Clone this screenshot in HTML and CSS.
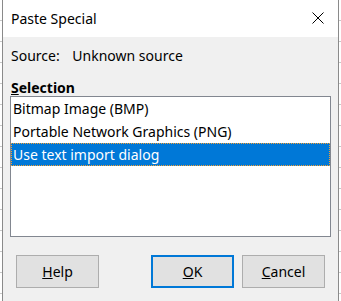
FILE: index.html
```html
<!DOCTYPE html>
<html lang="en">
<head>
    <meta charset="UTF-8">
    <title>Paste Special</title>
    <link rel="stylesheet" href="styles.css">
</head>
<body>
    <div class="screen">
        <div class="gutter"></div>
        <div class="dialog">
            <div class="titlebar">
                <span class="title">Paste Special</span>
                <svg class="close" width="12" height="12" viewBox="0 0 12 12">
                    <path d="M0.5 0.5 L11.5 11.5 M11.5 0.5 L0.5 11.5" stroke="#000" stroke-width="1" fill="none"/>
                </svg>
            </div>
            <div class="content">
                <div class="source">
                    <span class="source-label">Source:</span>
                    <span>Unknown source</span>
                </div>
                <div class="sel-label"><u>S</u>election</div>
                <ul class="listbox">
                    <li>Bitmap Image (BMP)</li>
                    <li>Portable Network Graphics (PNG)</li>
                    <li class="selected">Use text import dialog</li>
                </ul>
                <div class="buttons">
                    <button class="btn"><u>H</u>elp</button>
                    <div class="spacer"></div>
                    <button class="btn btn-default"><u>O</u>K</button>
                    <button class="btn"><u>C</u>ancel</button>
                </div>
            </div>
        </div>
        <div class="gutter"></div>
    </div>
</body>
</html>
```

FILE: styles.css
```css
:root {
    --dialog-bg: #f0f0f0;
    --border: #8a8a8a;
    --btn-bg: #e1e1e1;
    --btn-border: #adadad;
    --accent: #0078d7;
}

* {
    margin: 0;
    padding: 0;
    box-sizing: border-box;
}

body {
    background: #fff;
    font-family: "Noto Sans", "Open Sans", sans-serif;
    font-size: 14px;
    color: #000;
}

.screen {
    display: flex;
    height: 301px;
    overflow: hidden;
}

.gutter {
    width: 2px;
    background: repeating-linear-gradient(to bottom, transparent 0 20px, #c8c8c8 20px 21px);
}

.dialog {
    width: 337px;
    display: flex;
    flex-direction: column;
    border-left: 1px solid var(--border);
    border-right: 1px solid var(--border);
    background: var(--dialog-bg);
}

.titlebar {
    height: 37px;
    background: #fff;
    display: flex;
    align-items: center;
    justify-content: space-between;
    padding: 0 14px 0 8px;
}

.title {
    line-height: 37px;
}

.close {
    display: block;
    margin-top: -1px;
}

.content {
    flex: 1;
    padding: 9px 7px 0 7px;
}

.source {
    line-height: 20px;
    padding-left: 1px;
}

.source-label {
    margin-right: 9px;
}

.sel-label {
    margin-top: 13px;
    height: 17px;
    line-height: 17px;
    font-weight: bold;
    padding-left: 1px;
}

.listbox {
    list-style: none;
    height: 141px;
    background: #fff;
    border: 1px solid #828790;
}

.listbox li {
    height: 23px;
    line-height: 23px;
    padding-left: 2px;
    white-space: nowrap;
}

.listbox li.selected {
    background: var(--accent);
    color: #fff;
    border: 1px dotted #f5a033;
    line-height: 21px;
    padding-left: 1px;
}

.buttons {
    display: flex;
    gap: 8px;
    margin-top: 18px;
    padding: 0 6px;
}

.spacer {
    flex: 1;
}

.btn {
    width: 83px;
    height: 33px;
    background: var(--btn-bg);
    border: 1px solid var(--btn-border);
    font-family: inherit;
    font-size: 14px;
    color: #000;
}

.btn-default {
    border: 2px solid var(--accent);
}
```
